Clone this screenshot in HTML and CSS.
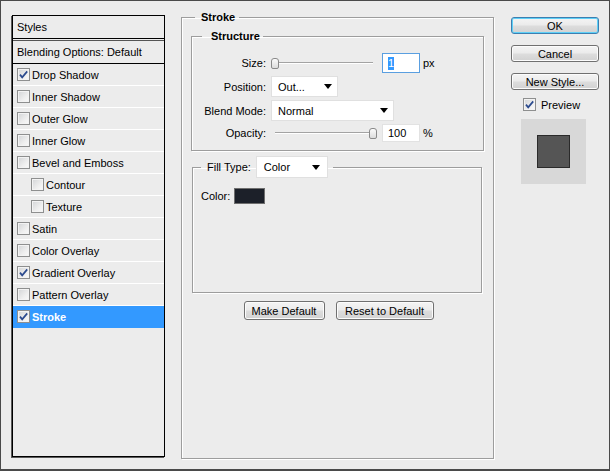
FILE: index.html
```html
<!DOCTYPE html>
<html>
<head>
<meta charset="utf-8">
<title>Layer Style</title>
<link rel="stylesheet" href="styles.css">
</head>
<body>
<div class="dialog">
  <div class="styles-panel">
    <div class="panel-head">Styles</div>
    <div class="panel-blend">Blending Options: Default</div>
    <ul class="style-list">
      <li class="item"><span class="cb"><svg viewBox="0 0 11 11"><path d="M2 5.6 L4.2 8.4 L9.2 2.4"/></svg></span>Drop Shadow</li>
      <li class="item"><span class="cb"></span>Inner Shadow</li>
      <li class="item"><span class="cb"></span>Outer Glow</li>
      <li class="item"><span class="cb"></span>Inner Glow</li>
      <li class="item"><span class="cb"></span>Bevel and Emboss</li>
      <li class="item sub"><span class="cb"></span>Contour</li>
      <li class="item sub"><span class="cb"></span>Texture</li>
      <li class="item"><span class="cb"></span>Satin</li>
      <li class="item"><span class="cb"></span>Color Overlay</li>
      <li class="item"><span class="cb"><svg viewBox="0 0 11 11"><path d="M2 5.6 L4.2 8.4 L9.2 2.4"/></svg></span>Gradient Overlay</li>
      <li class="item"><span class="cb"></span>Pattern Overlay</li>
      <li class="item active"><span class="cb"><svg viewBox="0 0 11 11"><path d="M2 5.6 L4.2 8.4 L9.2 2.4"/></svg></span>Stroke</li>
    </ul>
  </div>

  <fieldset class="group stroke-group">
    <legend class="legend-main">Stroke</legend>
    <fieldset class="group structure">
      <legend class="legend-sub">Structure</legend>
      <div class="form-grid">
        <span class="lbl">Size:</span>
        <div class="ctl">
          <div class="slider"><span class="thumb"></span></div>
          <div class="num focus"><span class="sel">1</span></div>
          <span class="unit">px</span>
        </div>
        <span class="lbl">Position:</span>
        <div class="ctl">
          <div class="select w-pos"><span>Out...</span><span class="arrow"></span></div>
        </div>
        <span class="lbl">Blend Mode:</span>
        <div class="ctl">
          <div class="select w-blend"><span>Normal</span><span class="arrow"></span></div>
        </div>
        <span class="lbl">Opacity:</span>
        <div class="ctl">
          <div class="slider end"><span class="thumb"></span></div>
          <div class="num short"><span>100</span></div>
          <span class="unit">%</span>
        </div>
      </div>
    </fieldset>

    <fieldset class="group fill">
      <legend class="legend-fill"><span class="fill-lbl">Fill Type:</span><span class="select w-fill"><span>Color</span><span class="arrow"></span></span></legend>
      <div class="color-row"><span>Color:</span><span class="swatch"></span></div>
    </fieldset>

    <div class="btn-row">
      <button class="btn w-make">Make Default</button>
      <button class="btn w-reset">Reset to Default</button>
    </div>
  </fieldset>

  <div class="side">
    <button class="btn side-btn default">OK</button>
    <button class="btn side-btn">Cancel</button>
    <button class="btn side-btn">New Style...</button>
    <div class="preview-row"><span class="cb"><svg viewBox="0 0 11 11"><path d="M2 5.6 L4.2 8.4 L9.2 2.4"/></svg></span>Preview</div>
    <div class="preview-box"><span class="preview-swatch"></span></div>
  </div>
</div>
</body>
</html>
```

FILE: styles.css
```css
* { box-sizing: border-box; }

html, body {
  margin: 0;
  padding: 0;
  background: #ececec;
}

body {
  font-family: "Liberation Sans", Arial, sans-serif;
  font-size: 11px;
  color: #000;
}

.dialog {
  width: 610px;
  height: 471px;
  border: 1px solid #4a4a4a;
  border-bottom-width: 2px;
  background: #ececec;
  display: flex;
  align-items: flex-start;
}

/* ---------- Left styles panel ---------- */
.styles-panel {
  width: 153px;
  height: 442px;
  margin: 14px 0 0 11px;
  border: 1px solid #000;
  box-shadow: -1px 1px 0 #5a5a5a;
  background: #ececec;
  display: flex;
  flex-direction: column;
}

.panel-head {
  height: 23px;
  line-height: 22px;
  padding-left: 4px;
  border-bottom: 1px solid #000;
}

.panel-blend {
  height: 24px;
  line-height: 22px;
  margin-top: 1px;
  padding-left: 4px;
  border-top: 1px solid #555;
  border-bottom: 1px solid #000;
}

.style-list {
  list-style: none;
  margin: 0;
  padding: 0;
}

.item {
  height: 22px;
  border-bottom: 1px solid #fff;
  display: flex;
  align-items: center;
  padding-left: 4px;
  white-space: nowrap;
}

.item.sub { padding-left: 18px; }

.item.active {
  background: #3399ff;
  color: #fff;
  font-weight: bold;
  border-bottom-color: #3399ff;
}

.cb {
  width: 13px;
  height: 13px;
  flex: none;
  margin-right: 2px;
  border: 1px solid #8e8f8f;
  background: linear-gradient(135deg, #d2d4d6 0%, #eeeeee 60%, #fafafa 100%);
  box-shadow: inset 0 0 0 1px #f3f3f3;
  display: flex;
  align-items: center;
  justify-content: center;
}

.cb svg {
  width: 11px;
  height: 11px;
  display: block;
}

.cb path {
  fill: none;
  stroke: #2b4a8e;
  stroke-width: 1.7;
}

/* ---------- Group boxes ---------- */
.group {
  margin: 0;
  min-inline-size: 0;
  border: 1px solid #9d9d9d;
  box-shadow: 1px 1px 0 #fff, inset 1px 1px 0 #fff;
}

.stroke-group {
  width: 313px;
  height: 448px;
  margin: 10px 0 0 16px;
  padding: 0 9px;
}

.legend-main {
  font-weight: bold;
  line-height: 13px;
  margin-left: 4px;
  padding: 0 4px 0 6px;
}

.structure {
  margin-top: 6px;
  padding: 10px 0 8px 0;
}

.legend-sub {
  font-weight: bold;
  line-height: 13px;
  margin-left: 10px;
  padding: 0 3px 0 9px;
}

.form-grid {
  display: grid;
  grid-template-columns: 74px auto;
  grid-template-rows: 20px 21px 21px 18px;
  column-gap: 5px;
  row-gap: 3px;
  align-items: center;
}

.lbl {
  text-align: right;
}

.ctl {
  display: flex;
  align-items: center;
  height: 100%;
}

.slider {
  width: 106px;
  height: 12px;
  display: flex;
  align-items: center;
  justify-content: flex-start;
  background:
    linear-gradient(to bottom, transparent 5px, #a3a3a3 5px, #a3a3a3 6px, #ffffff 6px, #ffffff 7px, transparent 7px)
    center / calc(100% - 8px) 100% no-repeat;
}

.slider.end { justify-content: flex-end; }

.thumb {
  width: 8px;
  height: 11px;
  border: 1px solid #8a8a8a;
  border-radius: 3px 3px 2px 2px;
  background: linear-gradient(to bottom, #fbfbfb, #dcdcdc);
}

.num {
  width: 38px;
  height: 20px;
  margin-left: 5px;
  background: #fff;
  border: 1px solid #e2e2e2;
  padding-left: 5px;
  display: flex;
  align-items: center;
}

.num.focus {
  border-color: #5a9fe0;
}

.num.short { height: 18px; }

.sel {
  background: #3399ff;
  color: #fff;
  line-height: 13px;
}

.unit {
  margin-left: 3px;
}

.select {
  height: 21px;
  background: #fff;
  border: 1px solid #e0e0e0;
  display: flex;
  align-items: center;
  justify-content: space-between;
  padding: 0 5px 0 6px;
}

.w-pos { width: 67px; }
.w-blend { width: 123px; }

.arrow {
  width: 0;
  height: 0;
  border-left: 4px solid transparent;
  border-right: 4px solid transparent;
  border-top: 5px solid #000;
}

/* ---------- Fill ---------- */
.fill {
  margin: 5px 2px 0 1px;
  padding: 10px 8px 88px;
}

.legend-fill {
  margin-left: 0;
  padding: 0 5px 0 6px;
  display: flex;
  align-items: center;
  font-weight: normal;
}

.fill-lbl { margin-right: 5px; }

.w-fill {
  width: 72px;
  height: 22px;
  padding: 0 7px 0 7px;
}

.color-row {
  display: flex;
  align-items: center;
  height: 16px;
}

.swatch {
  width: 31px;
  height: 16px;
  margin-left: 4px;
  background: #1c2029;
  border: 1px solid #6e6e6e;
}

/* ---------- Buttons ---------- */
.btn {
  font-family: "Liberation Sans", Arial, sans-serif;
  font-size: 11px;
  color: #000;
  padding: 0;
  border: 1px solid #707070;
  border-radius: 3px;
  background: linear-gradient(to bottom, #f4f4f4 0%, #ebebeb 48%, #dddddd 52%, #d2d2d2 100%);
  box-shadow: inset 0 0 0 1px #fcfcfc;
  cursor: default;
}

.btn-row {
  display: flex;
  justify-content: center;
  gap: 11px;
  margin-top: 8px;
  padding-left: 2px;
}

.w-make { width: 81px; height: 19px; }
.w-reset { width: 98px; height: 19px; }

.side {
  width: 88px;
  margin: 16px 0 0 17px;
  display: flex;
  flex-direction: column;
}

.side-btn {
  width: 88px;
  height: 17px;
  margin-bottom: 11px;
}

.side-btn.default {
  border-color: #3c7fb1;
  box-shadow: inset 0 0 0 1px #5fd0f7;
}

.preview-row {
  display: flex;
  align-items: center;
  height: 15px;
  margin: -4px 0 0 12px;
}

.preview-row .cb { margin-right: 5px; }

.preview-box {
  width: 65px;
  height: 65px;
  margin: 7px 0 0 10px;
  background: #d8d8d8;
  display: flex;
  align-items: center;
  justify-content: center;
}

.preview-swatch {
  width: 33px;
  height: 33px;
  background: #555;
  border: 1px solid #2a2a2a;
}
```
